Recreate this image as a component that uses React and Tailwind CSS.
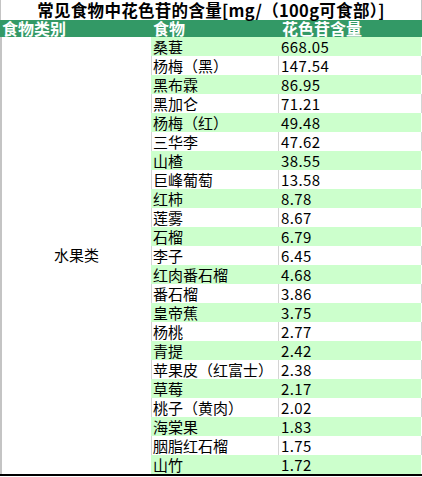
const FOODS = [
  ["桑葚", "668.05"],
  ["杨梅（黑）", "147.54"],
  ["黑布霖", "86.95"],
  ["黑加仑", "71.21"],
  ["杨梅（红）", "49.48"],
  ["三华李", "47.62"],
  ["山楂", "38.55"],
  ["巨峰葡萄", "13.58"],
  ["红柿", "8.78"],
  ["莲雾", "8.67"],
  ["石榴", "6.79"],
  ["李子", "6.45"],
  ["红肉番石榴", "4.68"],
  ["番石榴", "3.86"],
  ["皇帝蕉", "3.75"],
  ["杨桃", "2.77"],
  ["青提", "2.42"],
  ["苹果皮（红富士）", "2.38"],
  ["草莓", "2.17"],
  ["桃子（黄肉）", "2.02"],
  ["海棠果", "1.83"],
  ["胭脂红石榴", "1.75"],
  ["山竹", "1.72"],
]

function App() {
  return (
    <div className="h-[477px] w-[422px] overflow-hidden bg-white font-['Noto_Sans_CJK_SC','Noto_Sans',sans-serif] text-black">
      <div className="h-[20px] border-x border-[#c4c4c4] text-center text-[16.5px] font-bold leading-[20px] tracking-[0.3px] whitespace-nowrap">
        常见食物中花色苷的含量[mg/（100g可食部）]
      </div>

      <div className="grid h-[17px] grid-cols-[151px_127px_144px] bg-[#339966] text-[16px] font-bold leading-[17px] text-white">
        <div className="pl-[2px]">食物类别</div>
        <div className="pl-[2px]">食物</div>
        <div className="pl-[4px]">花色苷含量</div>
      </div>

      <div className="grid grid-cols-[151px_271px] border-b-2 border-black">
        <div className="flex items-center justify-center border-l-2 border-[#c4c4c4] text-[15px]">
          水果类
        </div>
        <div className="flex flex-col">
          {FOODS.map(([name, value], index) => {
            const green = index % 2 === 0
            return (
              <div
                key={name}
                className={`grid h-[19px] grid-cols-[127px_144px] text-[15px] leading-[19px] ${green ? "bg-[#ccffcc]" : "bg-white"}`}
              >
                <div className={`border-l pl-[1px] whitespace-nowrap ${green ? "border-[#ccffcc]" : "border-[#d4d4d4]"}`}>
                  {name}
                </div>
                <div className={`border-x pl-[2px] tracking-[0.4px] ${green ? "border-l-[#ccffcc] border-r-white" : "border-[#d4d4d4]"}`}>
                  {value}
                </div>
              </div>
            )
          })}
        </div>
      </div>
    </div>
  )
}

export default App
